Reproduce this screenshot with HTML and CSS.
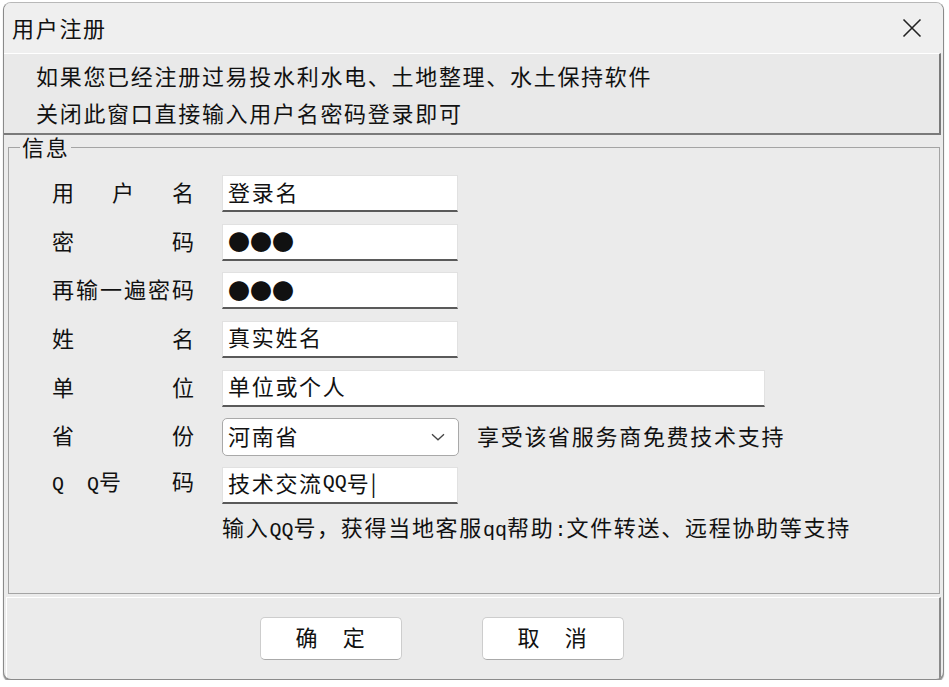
FILE: index.html
```html
<!DOCTYPE html>
<html lang="zh-CN">
<head>
<meta charset="utf-8">
<title>用户注册</title>
<link rel="stylesheet" href="styles.css">
</head>
<body>
<div class="window">
  <div class="titlebar">
    <span class="title">用户注册</span>
    <svg class="close" width="20" height="20" viewBox="0 0 20 20"><path d="M1.5 1.5L18.5 18.5M18.5 1.5L1.5 18.5" stroke="#222" stroke-width="1.6" fill="none"/></svg>
  </div>
  <div class="notice">
    <p>如果您已经注册过易投水利水电、土地整理、水土保持软件</p>
    <p>关闭此窗口直接输入用户名密码登录即可</p>
  </div>
  <fieldset class="group">
    <legend>信息</legend>
    <div class="form">
      <div class="label"><span>用</span><span>户</span><span>名</span></div>
      <div class="field">登录名</div>

      <div class="label"><span>密</span><span>码</span></div>
      <div class="field dots">●●●</div>

      <div class="label"><span>再</span><span>输</span><span>一</span><span>遍</span><span>密</span><span>码</span></div>
      <div class="field dots">●●●</div>

      <div class="label"><span>姓</span><span>名</span></div>
      <div class="field">真实姓名</div>

      <div class="label"><span>单</span><span>位</span></div>
      <div class="field wide">单位或个人</div>

      <div class="label"><span>省</span><span>份</span></div>
      <div class="combo">
        <div class="select"><span>河南省</span><svg width="14" height="8" viewBox="0 0 14 8"><path d="M1 1.2l6 5.6 6-5.6" fill="none" stroke="#444" stroke-width="1.3"/></svg></div>
        <span class="aside">享受该省服务商免费技术支持</span>
      </div>

      <div class="label label-q"><span class="mono">Q</span><span class="q2"><span class="mono">Q</span>号</span><span class="last">码</span></div>
      <div class="field">技术交流<span class="mono">QQ</span>号|</div>

      <div class="hint">输入<span class="mono">QQ</span>号，获得当地客服<span class="mono">qq</span>帮助<span class="mono">:</span>文件转送、远程协助等支持</div>
    </div>
  </fieldset>
  <div class="actions">
    <button class="btn">确　定</button>
    <button class="btn">取　消</button>
  </div>
</div>
</body>
</html>
```

FILE: styles.css
```css
html, body {
  margin: 0;
  background: #ffffff;
}

body {
  font-family: "Noto Sans CJK SC", "Noto Sans", sans-serif;
  font-size: 22px;
  letter-spacing: 1.7px;
  color: #111111;
}

.mono {
  font-family: "Liberation Mono", "DejaVu Sans Mono", monospace;
  font-size: 20px;
  letter-spacing: 0;
}

.window {
  margin: 2px 0 0 3px;
  width: 939px;
  height: 676px;
  border: 1px solid #8a8a8a;
  border-top-color: #b8b8b8;
  border-radius: 8px;
  background: #ebebeb;
  box-shadow: 0 2px 1px rgba(0, 0, 0, 0.4);
  display: flex;
  flex-direction: column;
  overflow: hidden;
}

.titlebar {
  height: 50px;
  flex: none;
  box-sizing: border-box;
  background: #efefef;
  display: flex;
  align-items: center;
  justify-content: space-between;
  padding: 0 21px 3px 8px;
}

.title {
  line-height: 1;
}

.close {
  display: block;
  margin-top: 3px;
}

.notice {
  flex: none;
  margin-right: 2px;
  background: #e9e9e9;
  border-top: 1px solid #ffffff;
  border-right: 2px solid #7a7a7a;
  border-bottom: 2px solid #7a7a7a;
  padding: 2.5px 0 2px 32px;
}

.notice p {
  margin: 0;
  line-height: 37px;
}

.group {
  flex: none;
  margin: -1px 3px 0 4px;
  padding: 0 0 49px 0;
  border: 1px solid #a4a4a4;
  min-width: 0;
}

.group legend {
  margin-left: 11px;
  padding: 0 2px 3px;
  line-height: 24px;
}

.form {
  display: grid;
  grid-template-columns: 142px auto;
  grid-template-rows: repeat(7, 37px) 28px;
  column-gap: 28px;
  row-gap: 11.67px;
  padding: 14.5px 0 0 43px;
  align-items: center;
  justify-items: start;
}

.label {
  width: 142px;
  display: flex;
  justify-content: space-between;
  line-height: 28px;
  padding-bottom: 5px;
  letter-spacing: 0;
}

.label-q {
  justify-content: flex-start;
  align-items: baseline;
}

.label-q .q2 {
  margin-left: 23px;
}

.label-q .last {
  margin-left: auto;
}

.field {
  box-sizing: border-box;
  width: 236px;
  height: 37px;
  background: #ffffff;
  border: 1px solid #e1e1e1;
  border-bottom: 2px solid #5a5a5a;
  padding: 0 0 5px 5px;
  display: flex;
  align-items: center;
  white-space: nowrap;
}

.field.wide {
  width: 543px;
}

.dots {
  font-size: 22px;
  letter-spacing: 0;
  padding-bottom: 3px;
}

.combo {
  display: flex;
  align-items: center;
  gap: 18px;
}

.aside {
  padding-bottom: 4px;
}

.select {
  box-sizing: border-box;
  width: 237px;
  height: 38px;
  background: #ffffff;
  border: 1px solid #a9a9a9;
  border-radius: 5px;
  padding: 0 13px 0 5px;
  display: flex;
  align-items: center;
  justify-content: space-between;
}

.select span {
  padding-bottom: 4px;
}

.select svg {
  display: block;
}

.hint {
  grid-column: 2;
  line-height: 28px;
  padding-bottom: 2px;
  white-space: nowrap;
}

.actions {
  flex: 1;
  margin: 3px 2px 0 2px;
  border-top: 1px solid #ffffff;
  border-left: 1px solid #ffffff;
  border-right: 2px solid #8a8a8a;
  padding: 19px 0 0 253px;
  display: flex;
  align-items: flex-start;
  gap: 80px;
}

.btn {
  box-sizing: border-box;
  width: 142px;
  height: 43px;
  background: #ffffff;
  border: 1px solid #cdcdcd;
  border-bottom-color: #aaaaaa;
  border-radius: 5px;
  font: inherit;
  letter-spacing: 1.7px;
  color: #111111;
  padding: 0 0 4px;
}
```
